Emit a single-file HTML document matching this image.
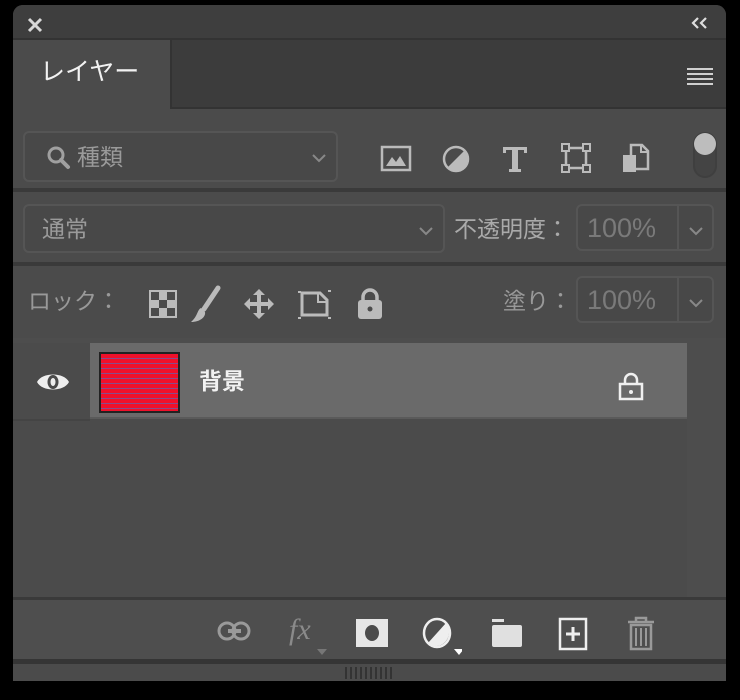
<!DOCTYPE html>
<html><head><meta charset="utf-8"><style>
*{margin:0;padding:0;box-sizing:border-box}
body{width:740px;height:700px;background:#000;position:relative;overflow:hidden;font-family:"Liberation Sans","Noto Sans CJK JP",sans-serif}
.a{position:absolute}
.panel{left:13px;top:5px;width:713px;height:676px;background:#4b4b4b;border-radius:10px 10px 0 0;overflow:hidden}
.box{position:absolute;border:2px solid #555;border-radius:6px;background:#484848}
.lbl{position:absolute;color:#9a9a9a;font-size:23px;line-height:30px}
svg{position:absolute}
</style></head><body>
<div class="a panel">
 <div class="a" style="left:0;top:0;width:713px;height:33px;background:#3e3e3e"></div>
 <div class="a" style="left:0;top:33px;width:713px;height:2px;background:#333"></div>
 <div class="a" style="left:157px;top:35px;width:556px;height:69px;background:#3c3c3c;border-left:2px solid #333;border-bottom:2px solid #333"></div>
 <div class="a" style="left:27px;top:52px;color:#f2f2f2;font-size:25px;line-height:30px">レイヤー</div>
 <svg style="left:13px;top:11px" width="18" height="18"><path d="M3 3L15 15M15 3L3 15" stroke="#d8d8d8" stroke-width="3"/></svg>
 <svg style="left:677px;top:11px" width="20" height="14"><path d="M8 2L3 7L8 12M16 2L11 7L16 12" stroke="#ddd" stroke-width="2.2" fill="none"/></svg>
 <svg style="left:674px;top:62px" width="26" height="18"><path d="M0 2H26M0 7H26M0 12H26M0 17H26" stroke="#cfcfcf" stroke-width="2"/></svg>

 <div class="box" style="left:10px;top:126px;width:315px;height:51px"></div>
 <svg style="left:33px;top:140px" width="26" height="26"><circle cx="10" cy="10" r="7" fill="none" stroke="#a0a0a0" stroke-width="3"/><path d="M15 15L22 22" stroke="#a0a0a0" stroke-width="4" stroke-linecap="round"/></svg>
 <div class="lbl" style="left:64px;top:137px">種類</div>
 <svg style="left:299px;top:148px" width="14" height="10"><path d="M1 2L7 8L13 2" stroke="#888" stroke-width="2" fill="none"/></svg>

 <svg style="left:367px;top:140px" width="32" height="28"><rect x="2" y="2" width="28" height="23" fill="none" stroke="#bbb" stroke-width="2.5"/><path d="M6 21L12 12L16 17L20 11L26 21Z" fill="#bbb"/></svg>
 <svg style="left:428px;top:139px" width="30" height="30"><circle cx="15" cy="15" r="12" fill="none" stroke="#bbb" stroke-width="2.5"/><path d="M23.5 6.5A12 12 0 0 1 6.5 23.5Z" fill="#bbb"/></svg>
 <svg style="left:488px;top:140px" width="28" height="28"><path d="M2 2H26V8H23V5H17V24H20V27H8V24H11V5H5V8H2Z" fill="#bbb"/></svg>
 <svg style="left:548px;top:138px" width="30" height="30"><rect x="5" y="5" width="20" height="20" fill="none" stroke="#bbb" stroke-width="2.5"/><g fill="#4b4b4b" stroke="#bbb" stroke-width="2"><rect x="1" y="1" width="7" height="7"/><rect x="22" y="1" width="7" height="7"/><rect x="1" y="22" width="7" height="7"/><rect x="22" y="22" width="7" height="7"/></g></svg>
 <svg style="left:608px;top:138px" width="30" height="32"><path d="M10 2H21L27 8V26H10Z" fill="none" stroke="#bbb" stroke-width="2.5"/><path d="M20 2V9H27" fill="none" stroke="#bbb" stroke-width="2"/><rect x="2" y="12" width="13" height="17" fill="#bbb"/></svg>
 <div class="a" style="left:680px;top:127px;width:24px;height:46px;border-radius:12px;border:2px solid #3f3f3f;background:#444"></div>
 <div class="a" style="left:681px;top:128px;width:22px;height:22px;border-radius:11px;background:#bdbdbd"></div>

 <div class="a" style="left:0;top:183px;width:713px;height:4px;background:#3a3a3a"></div>
 <div class="box" style="left:10px;top:199px;width:422px;height:49px"></div>
 <div class="lbl" style="left:29px;top:209px">通常</div>
 <svg style="left:406px;top:221px" width="14" height="10"><path d="M1 2L7 8L13 2" stroke="#888" stroke-width="2" fill="none"/></svg>
 <div class="lbl" style="left:441px;top:209px;color:#aaa">不透明度：</div>
 <div class="box" style="left:563px;top:199px;width:138px;height:47px"></div>
 <div class="a" style="left:664px;top:201px;width:2px;height:43px;background:#555"></div>
 <div class="lbl" style="left:574px;top:208px;font-size:27px;color:#7a7a7a">100%</div>
 <svg style="left:676px;top:221px" width="14" height="10"><path d="M1 2L7 8L13 2" stroke="#888" stroke-width="2" fill="none"/></svg>

 <div class="a" style="left:0;top:257px;width:713px;height:4px;background:#3a3a3a"></div>
 <div class="lbl" style="left:15px;top:281px;color:#999">ロック：</div>
 <svg style="left:135px;top:284px" width="30" height="30"><rect x="1" y="1" width="28" height="28" fill="#bbb"/><g fill="#4b4b4b"><rect x="3" y="3" width="8" height="8"/><rect x="19" y="3" width="8" height="8"/><rect x="11" y="11" width="8" height="8"/><rect x="3" y="19" width="8" height="8"/><rect x="19" y="19" width="8" height="8"/></g></svg>
 <svg style="left:175px;top:280px" width="34" height="40"><path d="M30 3L16 24" stroke="#bbb" stroke-width="5" stroke-linecap="round"/><path d="M13 23C9 25 10 31 3 37C12 37 18 32 17 27Z" fill="#bbb"/></svg>
 <svg style="left:229px;top:282px" width="34" height="34"><path d="M17 2L23 8H19V15H26V11L32 17L26 23V19H19V26H23L17 32L11 26H15V19H8V23L2 17L8 11V15H15V8H11Z" fill="#bbb"/></svg>
 <svg style="left:283px;top:282px" width="38" height="34"><path d="M6 6H24L31 13V28H6Z" fill="none" stroke="#bbb" stroke-width="3"/><path d="M22 6V15H31" fill="none" stroke="#bbb" stroke-width="2"/><g fill="#bbb"><rect x="2" y="4" width="3" height="2"/><rect x="2" y="30" width="3" height="2"/><rect x="32" y="30" width="3" height="2"/><rect x="32" y="3" width="3" height="2"/></g></svg>
 <svg style="left:343px;top:282px" width="28" height="34"><path d="M7 14V10A7 7 0 0 1 21 10V14" fill="none" stroke="#bbb" stroke-width="3.5"/><rect x="2" y="13" width="24" height="19" rx="3" fill="#bbb"/><circle cx="14" cy="22" r="2.5" fill="#4b4b4b"/></svg>
 <div class="lbl" style="left:490px;top:281px;color:#999">塗り：</div>
 <div class="box" style="left:563px;top:271px;width:138px;height:47px"></div>
 <div class="a" style="left:664px;top:273px;width:2px;height:43px;background:#555"></div>
 <div class="lbl" style="left:574px;top:280px;font-size:27px;color:#7a7a7a">100%</div>
 <svg style="left:676px;top:293px" width="14" height="10"><path d="M1 2L7 8L13 2" stroke="#888" stroke-width="2" fill="none"/></svg>

 <div class="a" style="left:0;top:333px;width:713px;height:5px;background:#4d4d4d"></div>
 <div class="a" style="left:674px;top:335px;width:39px;height:260px;background:#4d4d4d"></div>
 <div class="a" style="left:0;top:338px;width:77px;height:78px;background:#4b4b4b;border-bottom:2px solid #444"></div>
 <div class="a" style="left:77px;top:338px;width:597px;height:76px;background:#6a6a6a;border-bottom:2px solid #5a5a5a"></div>
 <svg style="left:23px;top:365px" width="34" height="24"><path d="M1 12C6 2 28 2 33 12C28 22 6 22 1 12Z" fill="#eee"/><ellipse cx="17" cy="12" rx="5.5" ry="7" fill="#4b4b4b"/><ellipse cx="17" cy="12" rx="2.5" ry="4" fill="#eee"/></svg>
 <div class="a" style="left:86px;top:347px;width:81px;height:61px;border:2px solid #222;background:repeating-linear-gradient(#f0102a 0 4px,#8a4a8a 4px 5px)"></div>
 <div class="a" style="left:186px;top:361px;color:#f2f2f2;font-size:23px;font-weight:bold;line-height:30px">背景</div>
 <svg style="left:605px;top:366px" width="26" height="30"><path d="M7 13V9A6 6 0 0 1 19 9V13" fill="none" stroke="#f0f0f0" stroke-width="2.5"/><rect x="2" y="13" width="22" height="15" fill="none" stroke="#f0f0f0" stroke-width="2.5"/><circle cx="13" cy="21" r="2" fill="#f0f0f0"/></svg>

 <div class="a" style="left:0;top:592px;width:713px;height:3px;background:#3a3a3a"></div>
 <div class="a" style="left:0;top:595px;width:713px;height:59px;background:#4e4e4e"></div>
 <svg style="left:204px;top:615px" width="36" height="22"><rect x="2" y="3" width="16" height="16" rx="8" fill="none" stroke="#9a9a9a" stroke-width="3"/><rect x="16" y="3" width="16" height="16" rx="8" fill="none" stroke="#9a9a9a" stroke-width="3"/><path d="M11 11H24" stroke="#9a9a9a" stroke-width="4"/></svg>
 <div class="a" style="left:276px;top:608px;color:#8a8a8a;font-size:30px;font-style:italic;font-family:'Liberation Serif',serif">fx</div>
 <svg style="left:304px;top:644px" width="10" height="6"><path d="M0 0H10L5 6Z" fill="#777"/></svg>
 <svg style="left:342px;top:613px" width="34" height="30"><rect x="1" y="1" width="32" height="28" fill="#e6e6e6"/><ellipse cx="17" cy="15" rx="7" ry="8" fill="#4b4b4b"/></svg>
 <svg style="left:409px;top:612px" width="40" height="40"><ellipse cx="15" cy="16" rx="13" ry="14" fill="none" stroke="#eee" stroke-width="2.5"/><path d="M24 6A13 14 0 0 1 6 26Z" fill="#eee"/><path d="M32 32H42L37 38Z" fill="#fff"/></svg>
 <svg style="left:477px;top:613px" width="34" height="30"><path d="M2 4H14V1H2Z" fill="#e0e0e0"/><rect x="2" y="7" width="30" height="22" rx="2" fill="#e0e0e0"/></svg>
 <svg style="left:545px;top:612px" width="30" height="34"><rect x="2" y="2" width="26" height="30" fill="none" stroke="#eee" stroke-width="2.5"/><path d="M15 10V24M8 17H22" stroke="#eee" stroke-width="3"/></svg>
 <svg style="left:613px;top:611px" width="30" height="36"><path d="M2 6H28M10 6V2H20V6" fill="none" stroke="#999" stroke-width="2.5"/><path d="M5 9H25V33H5Z" fill="none" stroke="#999" stroke-width="2.5"/><path d="M10 12V30M15 12V30M20 12V30" stroke="#999" stroke-width="2"/></svg>

 <div class="a" style="left:0;top:654px;width:713px;height:5px;background:#353535"></div>
 <div class="a" style="left:0;top:659px;width:713px;height:17px;background:#4b4b4b"></div>
 <div class="a" style="left:332px;top:662px;width:48px;height:12px;background:repeating-linear-gradient(90deg,#333 0 2px,transparent 2px 5px)"></div>
</div>
</body></html>
